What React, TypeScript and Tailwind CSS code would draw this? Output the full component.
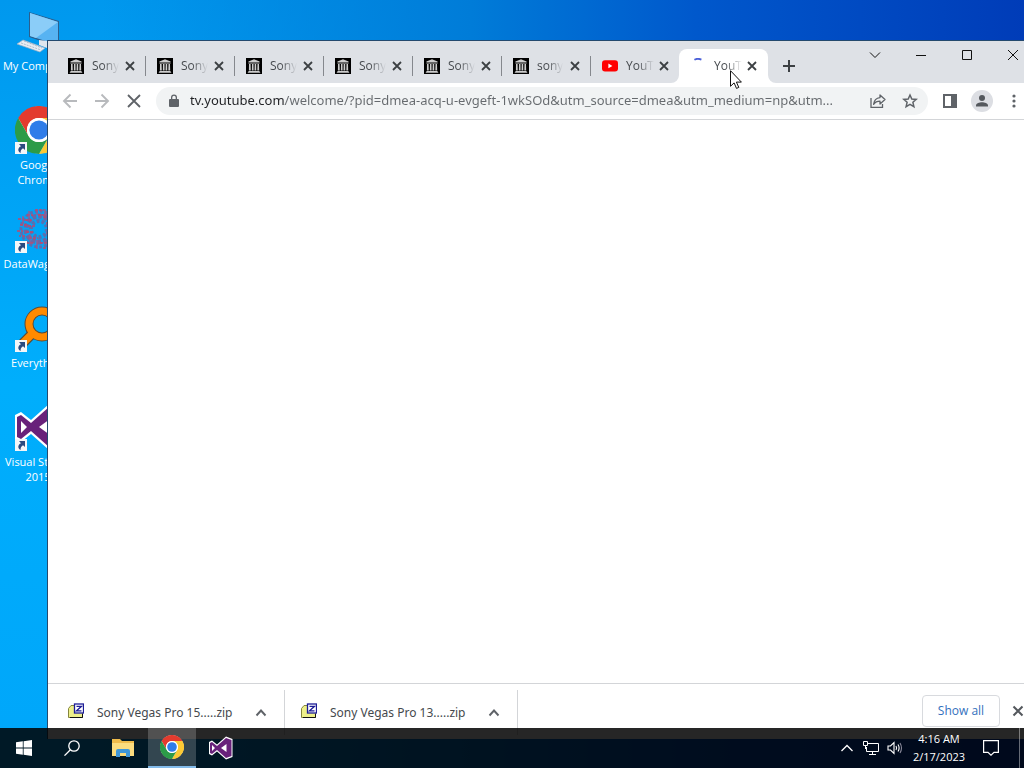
import React from 'react';

type IconProps = { className?: string };

const ArchiveIcon = () => (
  <svg viewBox="0 0 16 16" className="w-4 h-4 shrink-0">
    <rect width="16" height="16" fill="#000" />
    <path d="M8 1.2 13.6 3.4V4H2.4v-.6zM2.4 4.5h11.2v1H2.4zM2.4 13h11.2v.9H2.4zM1.8 14.3h12.4v.8H1.8z" fill="#ccc" />
    <path d="M3 6h1.6l.2 6.6H2.9zM6 6h1.5l.1 6.6H5.8zM8.7 6h1.5l.1 6.6H8.5zM11.5 6H13l.2 6.6h-1.9z" fill="#ccc" />
  </svg>
);

const YouTubeIcon = () => (
  <svg viewBox="0 0 16 16" className="w-4 h-4 shrink-0">
    <rect y="2.2" width="16" height="11.4" rx="3" fill="#f00" />
    <path d="M6.4 5.6v4.6l4-2.3z" fill="#fff" />
  </svg>
);

const SpinnerIcon = () => (
  <svg viewBox="0 0 16 16" className="w-4 h-4 shrink-0">
    <path d="M4.4 1.8Q7.4-.1 11.4 1.6" fill="none" stroke="#4a5fd8" strokeWidth="1.8" />
  </svg>
);

const CloseIcon = ({ className = 'w-4 h-4' }: IconProps) => (
  <svg viewBox="0 0 16 16" className={className}>
    <path d="m4 4 8 8M12 4l-8 8" fill="none" stroke="currentColor" strokeWidth="1.8" />
  </svg>
);

const ChromeLogo = ({ className }: IconProps) => (
  <svg viewBox="0 0 48 48" className={className}>
    <circle cx="24" cy="24" r="23.5" fill="#fff" />
    <path d="M24 12h20.8A24 24 0 0 0 3.2 12l10.4 18A12 12 0 0 1 24 12z" fill="#e33b2e" />
    <path d="M34.4 30 24 48A24 24 0 0 0 44.8 12H24a12 12 0 0 1 10.4 18z" fill="#fcc934" />
    <path d="M13.6 30 3.2 12A24 24 0 0 0 24 48l10.4-18a12 12 0 0 1-20.8 0z" fill="#2c9b48" />
    <circle cx="24" cy="24" r="12" fill="#fff" />
    <circle cx="24" cy="24" r="9.6" fill="#2f7de9" />
  </svg>
);

const VisualStudioLogo = ({ className }: IconProps) => (
  <svg viewBox="0 0 48 48" className={className}>
    <path d="M34 1 47 6v36l-13 5L16 31 6 39l-6-3V12l6-3 10 8z" fill="#fff" />
    <path
      fillRule="evenodd"
      d="M34 4 45 8v32l-11 4L16 28 6 36l-4-2V14l4-2 10 8zM35 16 24 24l11 8zM6 18v12l6-6z"
      fill="#68217a"
    />
  </svg>
);

const ComputerIcon = ({ className }: IconProps) => (
  <svg viewBox="0 0 48 48" className={className}>
    <path d="m14 5 30 9v26L14 30z" fill="#2b5f8e" />
    <path d="m15 6 28 9v23L15 29z" fill="#57b3f2" />
    <path d="m15 6 28 9-22 16-6-2z" fill="#8bcdf8" />
    <path d="m24 33 8 1 8 4-8 3-8-3z" fill="#dfe6ee" />
    <path d="M8 33 30 41l-5 4L2 37z" fill="#e9edf2" stroke="#9fb0c4" strokeWidth=".7" />
    <path d="m6 36 20 7M9 34l18 7" stroke="#9fb0c4" strokeWidth=".8" strokeDasharray="2 1" />
  </svg>
);

const DataWagonIcon = ({ className }: IconProps) => (
  <svg viewBox="0 0 48 48" className={className} fill="none">
    <circle cx="24" cy="24" r="8" stroke="#5a6fb0" strokeWidth="4" strokeDasharray="3 2" />
    <circle cx="24" cy="24" r="13" stroke="#6a68a6" strokeWidth="5" strokeDasharray="4 2" />
    <circle cx="24" cy="24" r="18" stroke="#5a6fb0" strokeWidth="3" strokeDasharray="3 2" />
    <path
      d="M3 14h5m-3 6h7M2 26h6m2 5H4m8-21h6m-8 5h8m-5 6h7m-9 6h7m-4 6h9m-12 5h7m2-33h9m-6 5h10m-8 28h9m-6 5h9M28 12h9m-6 6h10m-10 10h9m-7 6h9"
      stroke="#c2456a"
      strokeWidth="1.6"
      strokeDasharray="3 1"
    />
    <path d="M8 11v8M14 6v7m8-9v6m8-6v6M15 30v9m7-4v9" stroke="#a2558a" strokeWidth="1.3" />
  </svg>
);

const EverythingIcon = ({ className }: IconProps) => (
  <svg viewBox="0 0 48 48" className={className} fill="none">
    <path d="M16 31 3 44" stroke="#5b4a35" strokeWidth="10" />
    <circle cx="27" cy="20" r="13" stroke="#5b4a35" strokeWidth="9" />
    <path d="M17 30 3 44" stroke="#ff8a00" strokeWidth="7.5" />
    <circle cx="27" cy="20" r="13" stroke="#ff8a00" strokeWidth="7" />
  </svg>
);

const ShortcutBadge = () => (
  <svg viewBox="0 0 12 12" className="absolute left-0 bottom-0 w-3 h-3">
    <rect width="12" height="12" fill="#f4f6f8" />
    <path d="M4 2h6v6L8 6.3C6 7.5 5.5 9 5.6 11 2 9 3 5.5 6 4.2z" fill="#2b4a80" />
  </svg>
);

const ZipIcon = () => (
  <svg viewBox="0 0 16 16" className="w-4 h-4 shrink-0 mb-1">
    <path d="M.5 5.5 3 2.5h5v3h6.5v9H.5z" fill="#eef08a" stroke="#85853c" />
    <path d="M2 14.5h12.5V11" stroke="#111" fill="none" />
    <rect x="6.5" y="1" width="9" height="9" fill="#fff" stroke="#1c1c96" strokeWidth="1.3" />
    <path d="M8.5 3.3h5l-5 4.5h5" stroke="#1c1c96" strokeWidth="1.3" fill="none" />
  </svg>
);

const desktopItems = [
  { lines: ['My Computer'], icon: ComputerIcon, shortcut: false },
  { lines: ['Google', 'Chrome'], icon: ChromeLogo, shortcut: true },
  { lines: ['DataWagon 2'], icon: DataWagonIcon, shortcut: true },
  { lines: ['Everything'], icon: EverythingIcon, shortcut: true },
  { lines: ['Visual Studio', '2015'], icon: VisualStudioLogo, shortcut: true },
];

const tabs = [
  { title: 'Sony', icon: ArchiveIcon },
  { title: 'Sony', icon: ArchiveIcon },
  { title: 'Sony', icon: ArchiveIcon },
  { title: 'Sony', icon: ArchiveIcon },
  { title: 'Sony', icon: ArchiveIcon },
  { title: 'sony', icon: ArchiveIcon },
  { title: 'YouT', icon: YouTubeIcon },
  { title: 'YouT', icon: SpinnerIcon, active: true },
];

const downloads = ['Sony Vegas Pro 15.....zip', 'Sony Vegas Pro 13.....zip'];

const Tab = ({ tab, divider }: { tab: (typeof tabs)[number]; divider: boolean }) => (
  <div
    className={`relative flex items-center w-[89px] h-[34px] pl-[11px] pr-2 shrink-0 ${tab.active ? '-ml-px bg-white rounded-t-lg' : ''}`}
  >
    <tab.icon />
    <span className="ml-2 whitespace-nowrap text-xs text-[#45494d] mask-r-from-40% mask-r-to-100%">
      {tab.title}
    </span>
    <button aria-label="Close tab" className="absolute right-2 text-[#3c4043]">
      <CloseIcon />
    </button>
    {divider && <span className="absolute right-0 top-[7px] w-px h-5 bg-[#85888d]" />}
    {tab.active && (
      <>
        <svg viewBox="0 0 8 8" className="absolute -left-2 bottom-0 w-2 h-2">
          <path d="M8 0v8H0a8 8 0 0 0 8-8z" fill="#fff" />
        </svg>
        <svg viewBox="0 0 8 8" className="absolute -right-2 bottom-0 w-2 h-2">
          <path d="M0 0v8h8a8 8 0 0 1-8-8z" fill="#fff" />
        </svg>
        {/* Mouse pointer */}
        <svg viewBox="0 0 12 19" className="absolute left-[51px] top-[21px] w-3 h-[19px] z-10">
          <path d="M.5.7v15.6l3.6-3.4 2.4 5.5 2.3-1-2.4-5.300h5z" fill="#fff" stroke="#111" />
        </svg>
      </>
    )}
  </div>
);

const ToolButton = ({ label, dim, children }: { label: string; dim?: boolean; children: React.ReactNode }) => (
  <button aria-label={label} className={`w-8 h-7 shrink-0 flex items-center justify-center ${dim ? 'text-[#b8babd]' : 'text-[#5f6368]'}`}>
    {children}
  </button>
);

const ControlButton = ({ label, d }: { label: string; d: string }) => (
  <button aria-label={label} className="w-[46px] h-7 flex items-center justify-center">
    <svg viewBox="0 0 12 12" className="w-3 h-3" fill="none" stroke="#111">
      <path d={d} />
    </svg>
  </button>
);

const BrowserWindow = () => (
  <div className="absolute left-[47px] top-10 -right-3 -bottom-[11px] flex flex-col bg-white border-l border-t border-[#24496e]">
    {/* Tab strip */}
    <div className="flex items-start bg-[#dee1e6] h-[42px] shrink-0">
      <div className="flex pt-2 pl-[9px]">
        {tabs.map((tab, i) => (
          <Tab key={i} tab={tab} divider={i < 6} />
        ))}
        <button aria-label="New tab" className="ml-[7px] w-7 h-[34px] flex items-center justify-center">
          <svg viewBox="0 0 12 12" className="w-3 h-3" stroke="#3c4043" strokeWidth="2">
            <path d="M6 0v12M0 6h12" />
          </svg>
        </button>
      </div>
      <div className="ml-auto flex">
        <ControlButton label="Search tabs" d="m1 3.5 5 5 5-5" />
        <ControlButton label="Minimize" d="M1 6.5h10" />
        <ControlButton label="Maximize" d="M1.5 1.5h9v9h-9z" />
        <ControlButton label="Close" d="m1 1 10 10M11 1 1 11" />
      </div>
    </div>

    {/* Toolbar */}
    <div className="flex items-center h-[37px] px-[6px] border-b border-[#d3d5d8] shrink-0">
      <ToolButton label="Back" dim>
        <svg viewBox="0 0 16 16" className="w-4 h-4" fill="none" stroke="currentColor" strokeWidth="1.9">
          <path d="M15 8H2m6.500-6.500L2 8l6.500 6.500" />
        </svg>
      </ToolButton>
      <ToolButton label="Forward" dim>
        <svg viewBox="0 0 16 16" className="w-4 h-4" fill="none" stroke="currentColor" strokeWidth="1.9">
          <path d="M1 8h13M7.500 1.500 14 8l-6.500 6.500" />
        </svg>
      </ToolButton>
      <ToolButton label="Stop">
        <svg viewBox="0 0 16 16" className="w-4 h-4" fill="none" stroke="currentColor" strokeWidth="1.8">
          <path d="m2 2 12 12M14 2 2 14" />
        </svg>
      </ToolButton>
      <div className="flex-1 min-w-0 mx-[6px] h-7 px-[2px] flex items-center rounded-full bg-[#f1f3f4]">
        <ToolButton label="Site information">
          <svg viewBox="0 0 12 14" className="w-3 h-[14px]" fill="currentColor">
            <path
              fillRule="evenodd"
              d="M3 5V3.500a3 3 0 0 1 6 0V5h1q1 0 1 1v6q0 1-1 1H2q-1 0-1-1V6q0-1 1-1zm1.300 0h3.400V3.500a1.700 1.700 0 0 0-3.400 0z"
            />
          </svg>
        </ToolButton>
        <input
          aria-label="Address"
          className="flex-1 min-w-0 font-['Noto_Sans','Open_Sans',sans-serif] text-[13px] outline-none text-transparent bg-clip-text bg-linear-to-r from-[#202124] from-[95px] to-[#666a6e] to-[95px]"
          defaultValue="tv.youtube.com/welcome/?pid=dmea-acq-u-evgeft-1wkSOd&utm_source=dmea&utm_medium=np&utm..."
        />
        <ToolButton label="Share">
          <svg viewBox="0 0 16 16" className="w-4 h-4" fill="none" stroke="currentColor" strokeWidth="1.3">
            <path d="M1 5v9.300h11.500V11" />
            <path d="M10 2v2.600C6 5 4 7.500 3.600 11.400 5.200 9 7 8.200 10 8.200V11l5-4.500z" strokeLinejoin="round" />
          </svg>
        </ToolButton>
        <ToolButton label="Bookmark this tab">
          <svg viewBox="0 0 16 16" className="w-4 h-4" fill="none" stroke="currentColor" strokeWidth="1.5">
            <path d="m8 2 1.800 4 4.400.4-3.300 2.900 1 4.300L8 11.300l-3.900 2.300 1-4.300-3.300-2.900 4.400-.4z" />
          </svg>
        </ToolButton>
      </div>
      <ToolButton label="Side panel">
        <svg viewBox="0 0 14 14" className="w-[14px] h-[14px]" fill="currentColor">
          <path fillRule="evenodd" d="M0 0h14v14H0zm2 2v10h6V2z" />
        </svg>
      </ToolButton>
      <ToolButton label="Profile">
        <svg viewBox="0 0 22 22" className="w-[22px] h-[22px]">
          <circle cx="11" cy="11" r="11" fill="#dcdee3" />
          <circle cx="11" cy="8" r="3" fill="#54585d" />
          <path d="M5 16.500v-1.200c0-2 3.500-3.100 6-3.100s6 1.100 6 3.100v1.200z" fill="#54585d" />
        </svg>
      </ToolButton>
      <ToolButton label="Menu">
        <svg viewBox="0 0 4 14" className="w-1 h-[14px]" fill="currentColor">
          <circle cx="2" cy="2" r="1.6" />
          <circle cx="2" cy="7" r="1.6" />
          <circle cx="2" cy="12" r="1.6" />
        </svg>
      </ToolButton>
    </div>

    <main className="flex-1" />

    {/* Downloads */}
    <div className="flex shrink-0 border-t border-[#d3d5d8] pt-[6px] pb-1 pl-1 pr-[9px]">
      {downloads.map((name) => (
        <div key={name} className="flex items-center w-[233px] h-[45px] pl-4 pr-[15px] border-r border-[#d3d5d8]">
          <ZipIcon />
          <a href="#" className="ml-[13px] font-['Noto_Sans','Open_Sans',sans-serif] text-xs text-[#45494d] whitespace-nowrap">
            {name}
          </a>
          <button aria-label={`Options for ${name}`} className="ml-auto">
            <svg viewBox="0 0 16 16" className="w-4 h-4" fill="none" stroke="#5f6368" strokeWidth="1.9">
              <path d="m3.500 10.500 4.500-5 4.500 5" />
            </svg>
          </button>
        </div>
      ))}
      <div className="ml-auto flex items-start pt-[5px] gap-[9px]">
        <button className="h-8 w-[78px] rounded border border-[#d8dade] text-xs font-medium text-[#3370bd]">Show all</button>
        <button aria-label="Close downloads" className="h-8 text-[#54585d]">
          <CloseIcon className="w-[18px] h-[18px]" />
        </button>
      </div>
    </div>
  </div>
);

const Taskbar = () => (
  <footer className="relative z-10 flex h-10 shrink-0 bg-black/85 text-white">
    <button aria-label="Start" className="w-12 flex items-center justify-center">
      <svg viewBox="0 0 16 16" className="w-4 h-4" fill="#fff">
        <path d="m0 2.300 6.800-1v6.300H0zM7.600 1.200 16 0v7.600H7.600zM0 8.400h6.800v6.300l-6.800-1zM7.600 8.400H16V16l-8.400-1.200z" />
      </svg>
    </button>
    <button aria-label="Search" className="w-12 flex items-center justify-center">
      <svg viewBox="0 0 16 16" className="w-4 h-4" fill="none" stroke="#fff" strokeWidth="1.3">
        <circle cx="10" cy="6" r="5.2" />
        <path d="M6.400 9.700.5 15.600" />
      </svg>
    </button>
    <button aria-label="File Explorer" className="w-[52px] pl-[2px] flex items-center justify-center">
      <svg viewBox="0 0 22 20" className="w-[22px] h-5">
        <path d="M0 1h8l2 2h12v15H0z" fill="#efbb4b" />
        <path d="M0 5h22v13H0z" fill="#fbdc7e" />
        <path d="M4 19v-6q0-2 2-2h10q2 0 2 2v6h-4v-4H8v4z" fill="#3f97d8" />
      </svg>
    </button>
    <button aria-label="Google Chrome" className="w-12 bg-white/20 border-b-2 border-[#83bbea] flex items-center justify-center">
      <ChromeLogo className="w-6 h-6" />
    </button>
    <button aria-label="Visual Studio" className="w-[50px] flex items-center justify-center">
      <VisualStudioLogo className="w-6 h-6" />
    </button>

    <div className="ml-auto flex items-center">
      <button aria-label="Hidden icons" className="w-6 flex justify-center">
        <svg viewBox="0 0 12 12" className="w-3 h-3" fill="none" stroke="#fff" strokeWidth="1.3">
          <path d="m.5 9 5.500-5.500L11.500 9" />
        </svg>
      </button>
      <button aria-label="Network" className="w-6 flex justify-center">
        <svg viewBox="0 0 16 14" className="w-4 h-[14px]" fill="none" stroke="#fff">
          <path d="M5 2.500h10.500v8H3.500V6M9.500 10.500v3M6 13.500h7M.5.500h4v4h-4zM2.500 4.500V8" />
        </svg>
      </button>
      <button aria-label="Volume" className="w-6 flex justify-center">
        <svg viewBox="0 0 16 14" className="w-4 h-[14px]" fill="none" stroke="#fff" strokeWidth="1.1">
          <path d="M1 5h2.500L7 1.500v11L3.500 9H1z" />
          <path d="M9 5q1.200 2 0 4M11 3.500q2.200 3.500 0 7" />
          <path d="M13 2q3 5 0 10" stroke="#889" />
        </svg>
      </button>
      <div className="w-16 text-center text-[11px] leading-[18px] whitespace-nowrap">
        <p>4:16 AM</p>
        <p>2/17/2023</p>
      </div>
      <button aria-label="Notifications" className="w-10 flex justify-center">
        <svg viewBox="0 0 16 16" className="w-4 h-4" fill="none" stroke="#fff" strokeWidth="1.2">
          <path d="M.6.6h14.800v11.800H11L8 15.200l-3-2.800H.6z" />
        </svg>
      </button>
      <button aria-label="Show desktop" className="ml-2 w-[5px] h-10 border-l border-white/40" />
    </div>
  </footer>
);

export default function App() {
  return (
    <div className="relative h-screen overflow-hidden flex flex-col font-['Open_Sans','Liberation_Sans',sans-serif] bg-[linear-gradient(to_right,transparent_10%,#007cd8_46%,#0058cc_68%,#003cb8),linear-gradient(to_bottom,#0098ee,#00aefc_50%,#00a6fa)]">
      <div className="relative flex-1">
        {/* Desktop shortcuts */}
        <div className="w-[76px]">
          {desktopItems.map((item) => (
            <a key={item.lines[0]} href="#" className="flex flex-col items-center h-[99px] pt-[7px]">
              <span className="relative w-12 h-12 ml-[2px]">
                <item.icon className="w-12 h-12" />
                {item.shortcut && <ShortcutBadge />}
              </span>
              <span className="mt-[3px] flex flex-col text-[11px] leading-[15px] text-white text-center whitespace-nowrap">
                {item.lines.map((line) => (
                  <span key={line}>{line}</span>
                ))}
              </span>
            </a>
          ))}
        </div>
        <BrowserWindow />
      </div>
      <Taskbar />
    </div>
  );
}
